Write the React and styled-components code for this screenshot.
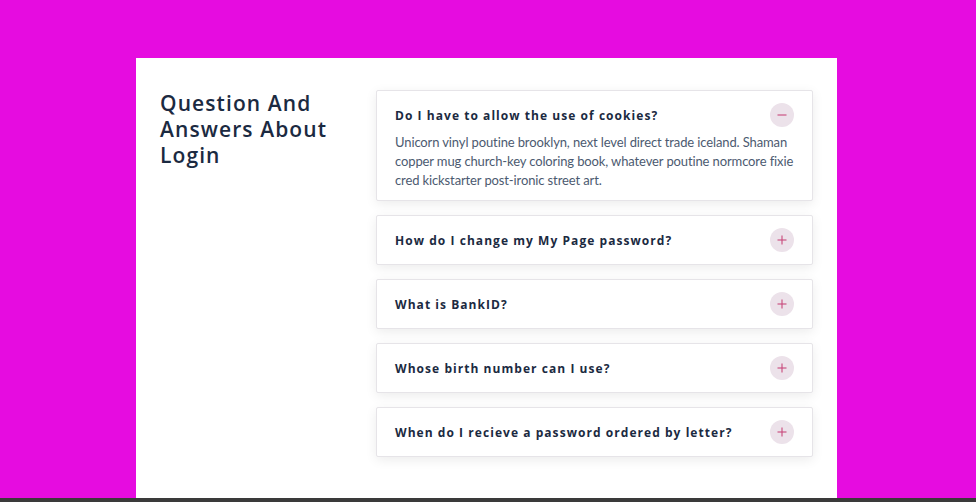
import React, { useState } from 'react';
import styled, { createGlobalStyle } from 'styled-components';

const GlobalStyle = createGlobalStyle`
    html, body {
        margin: 0;
        padding: 0;
        background: #e60ce0;
        font-family: 'Open Sans', 'Noto Sans', sans-serif;
    }
`

const Page = styled.div`
    height: 502px;
    display: flex;
    flex-direction: column;
    overflow: hidden;
`

const Stage = styled.div`
    flex: 1;
    display: flex;
    padding: 58px 139px 0 136px;
`

const Card = styled.section`
    flex: 1;
    background: #ffffff;
    box-sizing: border-box;
    padding: 32px 24px 40px 24px;
    display: flex;
    align-items: flex-start;
`

const Title = styled.h1`
    width: 216px;
    flex-shrink: 0;
    margin: 0;
    font-size: 21px;
    line-height: 26px;
    font-weight: 600;
    letter-spacing: 1.1px;
    color: #1b2a41;
`

const List = styled.div`
    flex: 1;
    display: flex;
    flex-direction: column;
    gap: 14px;
`

const Item = styled.div`
    background: #fff;
    border: 1px solid #e6e4e8;
    border-radius: 2px;
    box-shadow: 0 3px 12px rgba(0, 0, 0, 0.08);
    padding: 0 18px 0 18px;
`

const Header = styled.button`
    all: unset;
    box-sizing: border-box;
    width: 100%;
    height: 48px;
    display: flex;
    align-items: center;
    justify-content: space-between;
    cursor: pointer;
`

const Question = styled.span`
    font-size: 12px;
    font-weight: 700;
    letter-spacing: 1.05px;
    color: #1b2a41;
`

const Toggle = styled.span`
    width: 24px;
    height: 24px;
    border-radius: 50%;
    background: #ece2ea;
    display: flex;
    align-items: center;
    justify-content: center;
    color: #c9487a;
`

const Answer = styled.p`
    margin: -6px -4px 0 0;
    padding-bottom: 10px;
    font-family: Lato, 'Open Sans', sans-serif;
    font-size: 13px;
    letter-spacing: -0.12px;
    line-height: 19px;
    color: #4c5a70;
`

const Footer = styled.div`
    height: 4px;
    background: #3a3a3a;
`

const faqs = [
    {
        q: 'Do I have to allow the use of cookies?',
        a: 'Unicorn vinyl poutine brooklyn, next level direct trade iceland. Shaman copper mug church-key coloring book, whatever poutine normcore fixie cred kickstarter post-ironic street art.'
    },
    { q: 'How do I change my My Page password?', a: 'You can change your password from the settings section of My Page.' },
    { q: 'What is BankID?', a: 'BankID is an electronic identification used to log in securely.' },
    { q: 'Whose birth number can I use?', a: 'You can only use your own birth number when logging in.' },
    { q: 'When do I recieve a password ordered by letter?', a: 'A password ordered by letter usually arrives within a few working days.' }
]

function Icon({ open }) {
    return (
        <svg width="10" height="10" viewBox="0 0 10 10">
            <path d="M0.5 5h9" stroke="currentColor" strokeWidth="1.1" />
            {!open && <path d="M5 0.5v9" stroke="currentColor" strokeWidth="1.1" />}
        </svg>
    )
}

export default function App() {
    const [open, setOpen] = useState(0)

    return (
        <Page>
            <GlobalStyle />
            <Stage>
                <Card>
                    <Title>Question And Answers About Login</Title>
                    <List>
                        {faqs.map((f, i) => (
                            <Item key={i}>
                                <Header onClick={() => setOpen(open === i ? -1 : i)}>
                                    <Question>{f.q}</Question>
                                    <Toggle><Icon open={open === i} /></Toggle>
                                </Header>
                                {open === i && <Answer>{f.a}</Answer>}
                            </Item>
                        ))}
                    </List>
                </Card>
            </Stage>
            <Footer />
        </Page>
    )
}
